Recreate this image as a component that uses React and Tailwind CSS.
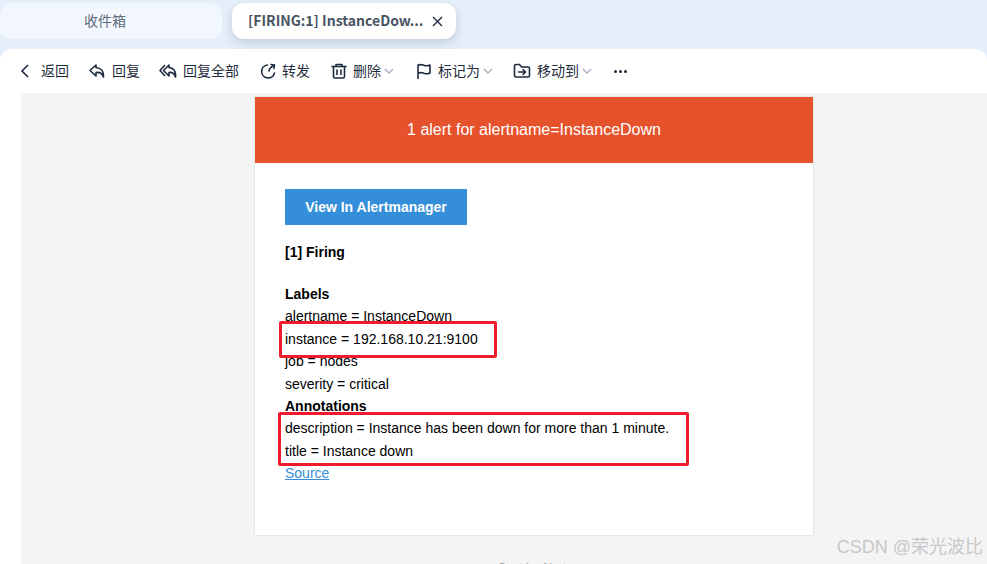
import React from 'react';

const sans = '[font-family:"Noto_Sans_CJK_SC","Noto_Sans",sans-serif]';

const Chevron = () => (
  <svg width="10" height="10" viewBox="0 0 10 10" fill="none" stroke="#a8b2bf" strokeWidth="1.4" className="ml-[3px] mt-[2px]">
    <path d="M1 3l4 4 4-4" />
  </svg>
);

const Icon = ({ children }) => (
  <svg width="18" height="18" viewBox="0 0 18 18" fill="none" stroke="#1c2b3f" strokeWidth="1.6" strokeLinecap="round" strokeLinejoin="round">
    {children}
  </svg>
);

// toolbar entries, gap comes from each item's own width
const toolbarItems = [
  {
    label: '回复',
    width: 'w-[71px]',
    icon: (
      <Icon>
        <path d="M8 3L2 8.500l6 5.500v-3.500c3.500-.5 6 .5 7.500 4.500.5-5.500-2.500-9-7.500-9.500z" />
      </Icon>
    )
  },
  {
    label: '回复全部',
    width: 'w-[100px]',
    icon: (
      <Icon>
        <path d="M5.500 3.500L1 8.500l4.500 5" />
        <path d="M10 3L4.500 8.500l5.500 5.500v-3.500c3-.5 5 .5 6.500 4.500.5-5.500-1.500-9-6.500-9.500z" />
      </Icon>
    )
  },
  {
    label: '转发',
    width: 'w-[71px]',
    gap: 'gap-[5px]',
    icon: (
      <Icon>
        <path d="M8.500 3a6.500 6.500 0 1 0 7 8" />
        <path d="M12 2.500l3.500.5-.5 3.500" />
        <path d="M15 3.500c-2.500 1-4.500 3-5 5.500" />
      </Icon>
    )
  },
  {
    label: '删除',
    width: 'w-[85px]',
    gap: 'gap-[5px]',
    chevron: true,
    icon: (
      <Icon>
        <path d="M2 4.500h14" />
        <path d="M6 4.500V2.500h6v2" />
        <path d="M3.500 4.500v10a1.500 1.500 0 0 0 1.500 1.500h8a1.500 1.500 0 0 0 1.500-1.500v-10" />
        <path d="M7 8v4.500M11 8v4.500" />
      </Icon>
    )
  },
  {
    label: '标记为',
    width: 'w-[98px]',
    gap: 'gap-[5px]',
    chevron: true,
    icon: (
      <Icon>
        <path d="M3 16.500V3c3.500-1 4.500 0 6.500.5 2 .5 3.500.5 5.500-.5v8c-2 1-3.500 1-5.500.5-2-.5-3-1.500-6.500-.5" />
      </Icon>
    )
  },
  {
    label: '移动到',
    width: 'w-[100px]',
    chevron: true,
    icon: (
      <Icon>
        <path d="M1.500 4a1.500 1.500 0 0 1 1.500-1.500h3.500l2 2.500h6.500a1.500 1.500 0 0 1 1.500 1.500v7a1.500 1.500 0 0 1-1.500 1.500h-12a1.500 1.500 0 0 1-1.500-1.500z" />
        <path d="M5.500 10h7M10 7.500l2.500 2.500-2.500 2.500" />
      </Icon>
    )
  }
];

const Toolbar = () => (
  <div className={`flex h-11 items-center pl-[20px] text-[14px] text-[#1f2d3d] ${sans}`}>
    <div className="flex w-[68px] items-center gap-[11px]">
      <svg width="10" height="14" viewBox="0 0 10 14" fill="none" stroke="#1c2b3f" strokeWidth="1.600">
        <path d="M8 1L2 7l6 6" />
      </svg>
      <span className="pb-[2px]">返回</span>
    </div>
    {toolbarItems.map(item => (
      <div key={item.label} className={`flex items-center ${item.gap || 'gap-[6px]'} ${item.width}`}>
        {item.icon}
        <span className="flex items-center pb-[2px]">
          {item.label}
          {item.chevron && <Chevron />}
        </span>
      </div>
    ))}
    <div className="ml-[1px] flex gap-[2px]">
      <span className="size-[3px] rounded-full bg-[#1c2b3f]" />
      <span className="size-[3px] rounded-full bg-[#1c2b3f]" />
      <span className="size-[3px] rounded-full bg-[#1c2b3f]" />
    </div>
  </div>
);

const Tabs = () => (
  <div className={`flex h-[49px] gap-[10px] pt-[3px] text-[14px] ${sans}`}>
    <div className="flex h-9 w-[222px] items-center justify-center rounded-[12px] bg-[#f2f7fd] pb-[2px] pr-[12px] text-[#5f6b7a]">
      收件箱
    </div>
    <div className="flex h-9 w-[224px] items-center rounded-[12px] bg-white pl-[16px] text-[#4a5563] shadow-[0_4px_10px_rgba(90,110,140,0.25)]">
      <span className="w-[183px] whitespace-nowrap pb-[2px] font-bold">[FIRING:1] InstanceDow...</span>
      <svg width="11" height="11" viewBox="0 0 11 11" stroke="#1c2b3f" strokeWidth="1.400" className="ml-[1px]">
        <path d="M1 1l9 9M10 1l-9 9" />
      </svg>
    </div>
  </div>
);

const labels = ['alertname = InstanceDown', 'instance = 192.168.10.21:9100', 'job = nodes', 'severity = critical'];

const Mail = () => (
  <div className="ml-[233px] w-[560px] pt-[3px] [font-family:'Liberation_Sans',Arial,sans-serif] text-[14px] leading-[22.4px] text-black">
    <div className="border border-[#e8e8e8] bg-white">
      <div className="flex h-[66px] items-center justify-center bg-[#e6522c] text-[16px] text-white">
        1 alert for alertname=InstanceDown
      </div>
      <div className="relative h-[372px] pl-[30px] pt-[26px]">
        <div className="flex h-9 w-[182px] items-center justify-center bg-[#348eda] font-bold text-white">
          View In Alertmanager
        </div>
        <div className="mt-[16px] font-bold">[1] Firing</div>
        <div className="mt-[19.600px] font-bold">Labels</div>
        {labels.map(line => (
          <div key={line}>{line}</div>
        ))}
        <div className="font-bold">Annotations</div>
        <div>description = Instance has been down for more than 1 minute.</div>
        <div>title = Instance down</div>
        <a className="text-[#348eda] underline">Source</a>

        {/* red marker boxes drawn on top of the screenshot */}
        <div className="absolute left-[24px] top-[158px] h-[37px] w-[218px] rounded-[2px] border-[3px] border-[#ee1c2e]" />
        <div className="absolute left-[23px] top-[249px] h-[54px] w-[411px] rounded-[2px] border-[3px] border-[#ee1c2e]" />
      </div>
    </div>
    <div className="mt-[21px] pl-[244px] text-[12px] whitespace-nowrap text-[#999]">Sent by Alertmanager</div>
  </div>
);

const App = () => (
  <div className="relative h-[564px] w-[987px] overflow-hidden bg-[#e5eff9]">
    <Tabs />
    <div className="h-[515px] rounded-t-[12px] bg-white">
      <Toolbar />
      <div className="ml-[21px] h-[471px] overflow-hidden bg-[#f4f4f4]">
        <Mail />
      </div>
    </div>
    <div className="absolute bottom-[6px] right-[4px] [font-family:'Liberation_Sans','Noto_Sans_CJK_SC',sans-serif] text-[18px] leading-[22px] text-[#c8c8c8]">
      CSDN @荣光波比
    </div>
  </div>
);

export default App;
